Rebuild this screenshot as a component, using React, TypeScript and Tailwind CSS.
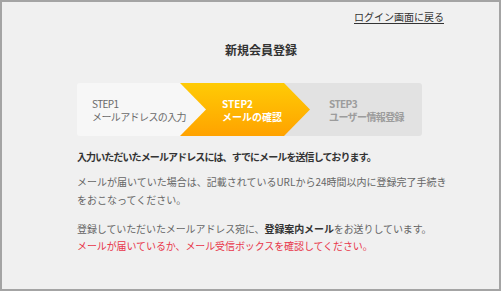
const font = { fontFamily: '"Noto Sans CJK JP", "Noto Sans", sans-serif' };

export default function App() {
  return (
    <div
      className="w-[501px] h-[291px] border-2 border-[#a4a4a4] bg-[#f0f0f0] text-[#666] overflow-hidden"
      style={font}
    >
      {/* top link */}
      <div className="flex justify-end pt-[8px] pr-[55px]">
        <a href="#" className="text-[10px] leading-[14px] text-[#333] underline underline-offset-2">
          ログイン画面に戻る
        </a>
      </div>

      {/* title */}
      <h1 className="flex justify-center pl-[21px] mt-[18px] text-[12px] leading-[16px] font-bold text-[#333]">
        新規会員登録
      </h1>

      <div className="ml-[75px] w-[345px] mt-[25px]">
        {/* steps */}
        <div className="flex h-[53px]">
          <div
            className="relative z-20 w-[129px] shrink-0 bg-[#f7f7f7] rounded-l-[3px] flex flex-col justify-center pl-[15px] text-[10px] leading-[13px] tracking-[-0.6px] text-[#6a6a6a]"
            style={{ clipPath: 'polygon(0 0, calc(100% - 26px) 0, 100% 50%, calc(100% - 26px) 100%, 0 100%)' }}
          >
            <span>STEP1</span>
            <span>メールアドレスの入力</span>
          </div>
          <div
            className="relative z-10 -ml-[26px] w-[130px] shrink-0 bg-gradient-to-b from-[#ffcb05] to-[#ffa200] flex flex-col justify-center pl-[42px] text-[10px] leading-[13px] font-bold text-white"
            style={{ clipPath: 'polygon(0 0, calc(100% - 26px) 0, 100% 50%, calc(100% - 26px) 100%, 0 100%)' }}
          >
            <span>STEP2</span>
            <span>メールの確認</span>
          </div>
          <div className="-ml-[26px] flex-1 bg-[#e2e2e2] rounded-r-[3px] flex flex-col justify-center pl-[45px] text-[10px] leading-[13px] tracking-[-0.6px] font-bold text-[#9c9c9c]">
            <span>STEP3</span>
            <span>ユーザー情報登録</span>
          </div>
        </div>

        {/* message */}
        <p className="mt-[14px] text-[10px] leading-[14px] font-bold text-[#333] tracking-[-0.9px] whitespace-nowrap">
          入力いただいたメールアドレスには、すでにメールを送信しております。
        </p>
        <p className="mt-[9px] w-[370px] text-[10px] leading-[18px]">
          メールが届いていた場合は、記載されているURLから24時間以内に登録完了手続き
          <br />
          をおこなってください。
        </p>
        <p className="mt-[11px] text-[10px] leading-[17px] tracking-[-0.1px] whitespace-nowrap">
          登録していただいたメールアドレス宛に、<b className="text-[#333]">登録案内メール</b>をお送りしています。
          <br />
          <span className="text-[#e8364a]">メールが届いているか、メール受信ボックスを確認してください。</span>
        </p>
      </div>
    </div>
  );
}
